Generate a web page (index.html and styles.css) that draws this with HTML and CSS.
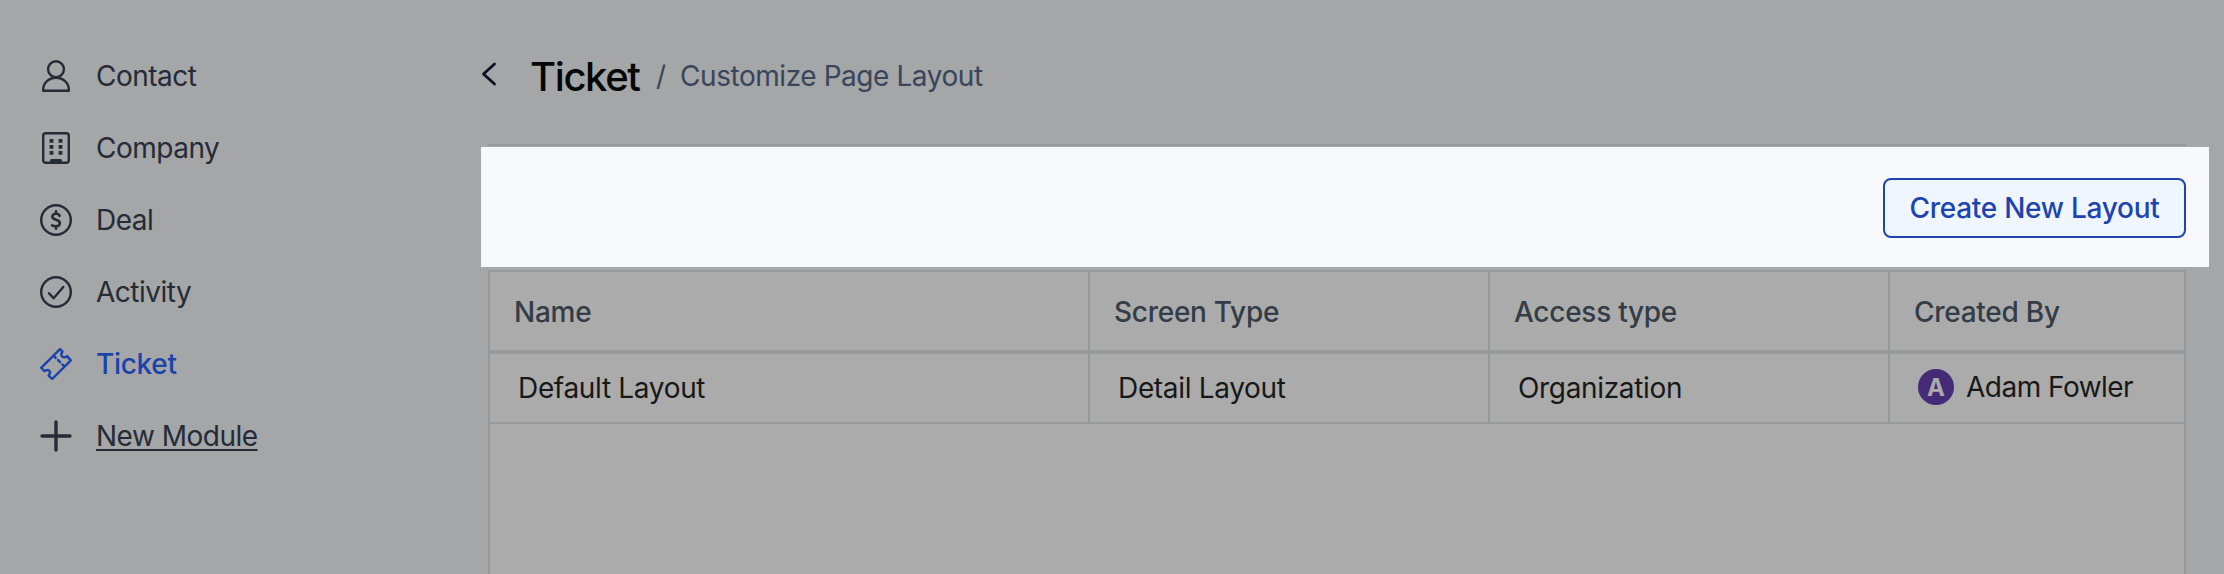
FILE: index.html
```html
<!DOCTYPE html>
<html lang="en">
<head>
<meta charset="utf-8">
<title>Customize Page Layout</title>
<link rel="stylesheet" href="styles.css">
</head>
<body>
<div class="app">
  <nav class="sidebar">
    <a class="nav-item"><svg class="icon" viewBox="0 0 32 32"><ellipse cx="16" cy="9.200" rx="7.900" ry="8"/><path d="M3.200 30.800v-1.300C3.200 23 9 17.800 16 17.800S28.800 23 28.800 29.500v1.300z"/></svg><span class="label">Contact</span></a>
    <a class="nav-item"><svg class="icon" viewBox="0 0 32 32"><rect x="3.200" y="1.200" width="25.600" height="29.600" rx="2.500"/><path class="solid" d="M9.600 7h3.800v3.800H9.600zM18.600 7h3.800v3.800h-3.800zM9.600 13h3.800v3.800H9.600zM18.600 13h3.800v3.800h-3.800zM9.600 19h3.800v3.800H9.600zM18.600 19h3.800v3.800h-3.800zM10 31.500v-3q0-1.500 1.500-1.500h9q1.500 0 1.500 1.500v3z"/></svg><span class="label">Company</span></a>
    <a class="nav-item"><svg class="icon" viewBox="0 0 32 32"><circle cx="16" cy="16" r="14.800"/><path class="dollar" d="M19.600 11.800c-.4-1.400-1.900-2.100-3.700-2.100-2.100 0-3.600 1.100-3.600 2.900 0 4.400 7.500 2.100 7.500 6.500 0 2-1.700 3.200-3.900 3.200-1.500 0-2.700-.3-3.800-.9M16 7.200v2.500M16 22.500v2.300"/></svg><span class="label">Deal</span></a>
    <a class="nav-item"><svg class="icon" viewBox="0 0 32 32"><circle cx="16" cy="16" r="14.800"/><path d="M9 17.200l4.600 5.100L23.300 11"/></svg><span class="label">Activity</span></a>
    <a class="nav-item active"><svg class="icon" viewBox="0 0 32 32"><path d="M1.200 19.800 20 1.200l2.500 2.500c-1.500 2-1.500 3.500-.4 4.700 1.200 1.200 3 1.200 4.900-.3l3.800 4.300L12.200 31l-3.600-3.400c1.700-2 1.700-3.700.6-4.800-1.200-1.200-3-1.100-4.800.4z"/><path d="M14.500 8.600l1.200 1.300M18.100 12.100l2 2M22.300 16.400l1.300 1.300"/></svg><span class="label">Ticket</span></a>
    <a class="nav-item new"><svg class="icon" viewBox="0 0 32 32"><path class="plus" d="M16 2v28M2 16h28"/></svg><span class="label">New Module</span></a>
  </nav>
  <main class="main">
    <header class="header">
      <svg class="back" viewBox="0 0 16 24"><path d="M13.500 2 2.500 12l11 10"/></svg>
      <h1 class="title">Ticket</h1>
      <span class="slash">/</span>
      <span class="crumb">Customize Page Layout</span>
    </header>
    <section class="spotlight"><button class="create">Create New Layout</button></section>
    <section class="table">
      <div class="row head"><div class="cell">Name</div><div class="cell">Screen Type</div><div class="cell">Access type</div><div class="cell">Created By</div></div>
      <div class="row data"><div class="cell">Default Layout</div><div class="cell">Detail Layout</div><div class="cell">Organization</div><div class="cell person"><span class="avatar">A</span><span class="name">Adam Fowler</span></div></div>
    </section>
  </main>
</div>
</body>
</html>
```
FILE: styles.css
```css
* { box-sizing: border-box; }
body { margin: 0; background: #a4a6a8; font-family: Inter, "Liberation Sans", sans-serif; font-size: 28px; color: #252b37; }
.app { display: flex; height: 574px; overflow: hidden; }
.sidebar { width: 481px; flex: none; padding: 40px 0 0 40px; letter-spacing: -0.5px; }
.nav-item { display: flex; align-items: center; height: 72px; gap: 24px; }
.icon { width: 32px; height: 32px; fill: none; stroke: currentColor; stroke-width: 2.4; stroke-linecap: round; stroke-linejoin: round; }
.solid { fill: currentColor; stroke: none; }
.dollar { stroke-width: 2.6; }
.plus { stroke-width: 3.4; }
.active { color: #1a43ab; font-weight: 500; letter-spacing: -0.3px; }
.new .label { text-decoration: underline; text-decoration-thickness: 2px; text-underline-offset: 3px; }
.main { flex: 1; display: flex; flex-direction: column; }
.header { height: 146px; margin: 0 38px 0 7px; display: flex; align-items: flex-start; border-bottom: 2px solid #97989b; line-height: 40px; white-space: nowrap; }
.back { width: 16px; height: 24px; margin: 62px 33px 0 -7px; fill: none; stroke: #0c1020; stroke-width: 2.8; stroke-linecap: round; stroke-linejoin: round; }
.title { margin: 57px 0 0; font-size: 40px; font-weight: 500; color: #050607; width: 126px; letter-spacing: -1.4px; }
.slash { margin-top: 56px; width: 24px; color: #39455a; }
.crumb { margin-top: 56px; color: #39455a; letter-spacing: -0.44px; }
.spotlight { margin: 1px 15px 3px 0; height: 120px; padding-right: 23px; background: #f7f9fd; display: flex; align-items: center; justify-content: flex-end; }
.create { width: 303px; height: 60px; padding: 0; margin-top: 2px; border: 2px solid #1d44af; border-radius: 8px; background: #eff6ff; color: #1d44af; font: 500 28px Inter, sans-serif; letter-spacing: -0.27px; white-space: nowrap; }
.table { flex: 1; margin: 0 38px 0 7px; border: 2px solid #97989c; border-bottom: 0; background: #ababab; }
.row { display: grid; grid-template-columns: 600px 400px 400px 1fr; }
.head { height: 82px; border-bottom: 4px solid #97989c; font-weight: 500; color: #333c47; letter-spacing: -0.27px; }
.data { height: 70px; border-bottom: 2px solid #97989c; color: #181818; letter-spacing: -0.33px; }
.cell { display: flex; align-items: center; padding: 2px 0 0 24px; border-right: 2px solid #97989c; white-space: nowrap; }
.cell:last-child { border-right: 0; }
.data .cell { padding: 0 0 0 28px; }
.data .person { gap: 12px; padding: 0 0 2px 28px; }
.name { letter-spacing: -0.52px; padding-bottom: 1px; }
.avatar { width: 36px; height: 36px; border-radius: 50%; background: #452a78; color: #ababab; display: flex; align-items: center; justify-content: center; font-size: 24px; font-weight: 700; letter-spacing: 0; }
```
